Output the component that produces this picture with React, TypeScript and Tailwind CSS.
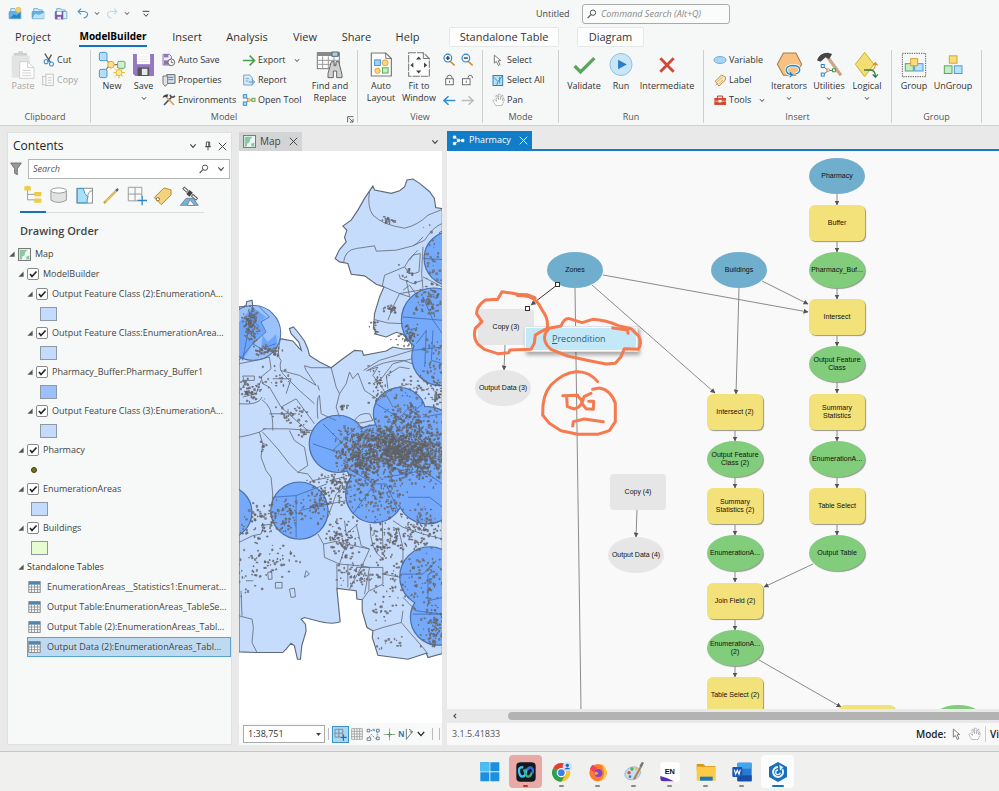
import React from "react";

type Kids = { children?: React.ReactNode };

const Svg = ({ box, w, h, children, className = "" }: Kids & { box: string; w: number; h: number; className?: string }) => (
  <svg viewBox={box} width={w} height={h} fill="none" className={"shrink-0 " + className} aria-hidden="true">
    {children}
  </svg>
);

const Chevron = ({ large = false }: { large?: boolean }) => (
  <Svg box="0 0 12 9" w={large ? 8 : 6} h={large ? 6 : 5}>
    <path d="M2 2 L6 6.5 L10 2" stroke="#444" strokeWidth={large ? 1.7 : 2} />
  </Svg>
);

const Close = () => (
  <Svg box="0 0 24 24" w={9} h={9}>
    <path d="M2 2 L22 22 M22 2 L2 22" stroke="currentColor" strokeWidth="2.6" />
  </Svg>
);

const Magnifier = ({ color = "#555" }: { color?: string }) => (
  <Svg box="0 0 30 30" w={10} h={10}>
    <circle cx="18" cy="11" r="8" stroke={color} strokeWidth="3" />
    <path d="M12 17 L2 27" stroke={color} strokeWidth="3.4" />
  </Svg>
);

/* ---------- quick access icons ---------- */
const QatFolder = ({ kind }: { kind: "new" | "open" | "save" }) => (
  <Svg box="0 0 42 40" w={14} h={13}>
    <path d="M8 14 V5 H20 L24 9 H34 V16" fill="#d8ebf8" stroke="#5aa3d6" strokeWidth="2.5" />
    <rect x="3" y="14" width="36" height="22" rx="1" fill={kind === "save" ? "#e3f0fa" : "#64b2e4"} stroke="#3d90cc" strokeWidth="2" />
    {kind === "new" && <path d="M6 34 L18 22 L26 26 L37 17 V34 Z" fill="#2f83c2" />}
    {kind === "open" && <path d="M4 35 L12 21 Q24 28 39 17 V35 Z" fill="#c3e2f6" />}
    {kind === "new" && <circle cx="31" cy="9" r="8" fill="#f3d36a" stroke="#dfb43c" strokeWidth="2" />}
    {kind === "save" && (
      <>
        <rect x="3" y="13" width="25" height="25" fill="#7a5aa8" />
        <rect x="8" y="14" width="15" height="10" fill="#fff" />
        <rect x="10" y="30" width="11" height="8" fill="#e6e0ef" />
      </>
    )}
  </Svg>
);

const Undo = ({ flip = false, color }: { flip?: boolean; color: string }) => (
  <Svg box="0 0 36 34" w={12} h={11}>
    <g transform={flip ? "translate(36 0) scale(-1 1)" : undefined}>
      <path d="M12 2 L3 11 L12 20 M4 11 H22 Q32 12 32 21 Q31 29 20 31" stroke={color} strokeWidth="3.4" />
    </g>
  </Svg>
);

/* ---------- ribbon icons ---------- */
const icons = {
  paste: (
    <Svg box="34 154 72 84" w={24} h={28}>
      <rect x="36" y="168" width="54" height="66" fill="#e3e3e3" />
      <path d="M42 168 H82 V160 H70 V155 H56 V160 H42 Z" fill="#cfcfcf" />
      <path d="M60 186 H84 L103 204 V236 H60 Z" fill="#fff" stroke="#cfcfcf" strokeWidth="3" />
      <path d="M84 186 V204 H103 M68 212 H94 M68 220 H94 M68 228 H94" stroke="#cfcfcf" strokeWidth="3" />
    </Svg>
  ),
  cut: (
    <Svg box="126 158 38 42" w={13} h={14}>
      <path d="M134 160 L152 188 M154 163 L142 184" stroke="#555" strokeWidth="4" />
      <circle cx="154" cy="191" r="6" stroke="#4b9bd4" strokeWidth="3.4" />
      <circle cx="138" cy="184" r="6" stroke="#4b9bd4" strokeWidth="3.4" />
    </Svg>
  ),
  copy: (
    <Svg box="126 216 40 42" w={13} h={14}>
      <rect x="128" y="226" width="21" height="26" stroke="#c4c4c4" strokeWidth="3" />
      <rect x="138" y="219" width="23" height="35" fill="#fafafa" stroke="#c4c4c4" strokeWidth="3" />
      <path d="M144 230 H156 M144 238 H156 M144 246 H156" stroke="#c4c4c4" strokeWidth="2.5" />
    </Svg>
  ),
  newModel: (
    <Svg box="294 154 84 84" w={28} h={28}>
      <path d="M312 172 L330 194 L310 222 M332 195 H360" stroke="#777" strokeWidth="3.5" />
      <rect x="298" y="158" width="23" height="25" rx="5" fill="#b5ddf5" stroke="#4b9bd4" strokeWidth="3" />
      <rect x="298" y="209" width="23" height="25" rx="5" fill="#b5ddf5" stroke="#4b9bd4" strokeWidth="3" />
      <circle cx="333" cy="195" r="10" fill="#ffe08a" stroke="#dca23a" strokeWidth="3" />
      <rect x="353" y="185" width="22" height="21" rx="4" fill="#d3efd2" stroke="#64a866" strokeWidth="3" />
      <path d="M357 203 V236 M340 219 H375 M345 207 L369 231 M369 207 L345 231" stroke="#e5b62f" strokeWidth="3" />
      <circle cx="357" cy="219" r="9" fill="#fff0a0" stroke="#e5b62f" strokeWidth="3" />
    </Svg>
  ),
  save: (
    <Svg box="396 156 70 76" w={23} h={25}>
      <path d="M399 162 H463 V229 H406 L399 222 Z" fill="#9578bf" />
      <rect x="411" y="162" width="40" height="31" fill="#fff" />
      <path d="M416 171 H446 M416 178 H446 M416 185 H446" stroke="#ddd" strokeWidth="2" />
      <rect x="413" y="203" width="35" height="26" fill="#555" />
      <rect x="426" y="207" width="17" height="19" fill="#e8e8e8" />
    </Svg>
  ),
  autoSave: (
    <Svg box="484 156 42 42" w={14} h={14}>
      <path d="M487 160 H506 L512 166 V192 H487 Z" fill="#f1ecf7" stroke="#8d76b5" strokeWidth="3" />
      <rect x="490" y="160" width="13" height="9" fill="#8d76b5" />
      <rect x="490" y="178" width="12" height="13" fill="#8d76b5" />
      <circle cx="512" cy="184" r="10" fill="#fff" stroke="#666" strokeWidth="3" />
      <path d="M512 178 V185 H518" stroke="#555" strokeWidth="2.5" />
    </Svg>
  ),
  properties: (
    <Svg box="484 216 42 42" w={14} h={14}>
      <path d="M498 221 H523 V247 H498 Z" fill="#cfe5f4" stroke="#666" strokeWidth="3" />
      <path d="M503 229 H518 M503 236 H518" stroke="#777" strokeWidth="3" />
      <path d="M487 225 H501 V248 L494 256 L487 248 Z" fill="#e2e2e2" stroke="#777" strokeWidth="3" />
    </Svg>
  ),
  environments: (
    <Svg box="484 275 42 42" w={14} h={14}>
      <path d="M490 311 L512 288" stroke="#555" strokeWidth="5" />
      <path d="M508 280 Q512 292 523 284" stroke="#555" strokeWidth="5" />
      <path d="M496 286 L520 311" stroke="#d7a06a" strokeWidth="5" />
      <path d="M485 289 Q490 279 503 279 L500 288 L493 287 Z" fill="#444" />
    </Svg>
  ),
  exportIcon: (
    <Svg box="727 158 42 40" w={14} h={13}>
      <path d="M729 178 H764 M750 163 L765 178 L750 193" stroke="#47a04b" strokeWidth="4.8" />
    </Svg>
  ),
  report: (
    <Svg box="727 216 42 42" w={14} h={14}>
      <path d="M732 222 H750 L758 230 V252 H732 Z" fill="#dbe9f4" stroke="#7ba6c8" strokeWidth="3" />
      <path d="M738 233 H748 M738 240 H746" stroke="#7ba6c8" strokeWidth="3" />
      <path d="M747 243 H764 M757 235 L765 243 L757 251" stroke="#4b9bd4" strokeWidth="3" />
    </Svg>
  ),
  openTool: (
    <Svg box="727 275 42 42" w={14} h={14}>
      <path d="M736 286 L748 296 L735 308 M748 296 H760" stroke="#666" strokeWidth="3" />
      <rect x="731" y="280" width="10" height="10" fill="#b5ddf5" stroke="#3d8ecb" strokeWidth="3" />
      <rect x="731" y="302" width="10" height="10" fill="#b5ddf5" stroke="#3d8ecb" strokeWidth="3" />
      <circle cx="748" cy="296" r="4.5" fill="#ffe08a" stroke="#dca23a" strokeWidth="3" />
      <rect x="757" y="291" width="9" height="9" fill="#d3efd2" stroke="#64a866" strokeWidth="3" />
    </Svg>
  ),
  find: (
    <Svg box="0 0 84 84" w={28} h={28}>
      <rect x="4" y="5" width="66" height="48" fill="#fff" stroke="#777" strokeWidth="3" />
      <rect x="4" y="5" width="66" height="10" fill="#888" />
      <path d="M4 28 H70 M4 40 H70 M20 16 V53 M37 16 V53 M54 16 V53" stroke="#999" strokeWidth="3" />
      <rect x="48" y="3" width="18" height="13" fill="#9ed2f2" stroke="#666" strokeWidth="3" />
      <path d="M42 46 L46 32 H54 V44 H60 V32 H68 L78 70 V80 H62 V60 H52 V80 H36 V68 Z" fill="#d0d0d0" stroke="#666" strokeWidth="3" />
    </Svg>
  ),
  autoLayout: (
    <Svg box="110 158 70 80" w={23} h={27}>
      <path d="M114 163 H158 L175 180 V233 H114 Z" fill="#fff" stroke="#777" strokeWidth="3.5" />
      <path d="M158 163 V180 H175" stroke="#777" strokeWidth="3" />
      <rect x="124" y="184" width="18" height="17" fill="#9fd0f3" stroke="#4b9bd4" strokeWidth="3" />
      <circle cx="156" cy="193" r="9" fill="#ffd978" stroke="#dca23a" strokeWidth="3" />
      <circle cx="133" cy="217" r="8" fill="#ffd978" stroke="#dca23a" strokeWidth="3" />
      <rect x="148" y="208" width="17" height="16" fill="#c8eec6" stroke="#57a95c" strokeWidth="3" />
    </Svg>
  ),
  fit: (
    <Svg box="224 158 72 80" w={24} h={27}>
      <path d="M229 163 H273 L291 180 V233 H229 Z" fill="#fff" stroke="#777" strokeWidth="3.2" strokeDasharray="22 3" />
      <path d="M273 163 V180 H291" stroke="#777" strokeWidth="3" />
      <path d="M251 183 L259 174 L267 183 Z M251 216 L259 225 L267 216 Z M243 192 L234 200 L243 208 Z M275 192 L285 200 L275 208 Z" fill="#444" />
    </Svg>
  ),
  select: (
    <Svg box="480 160 30 38" w={10} h={13}>
      <path d="M484 163 L484 187 L490 182 L496 194 L501 191 L495 180 L503 179 Z" fill="#fff" stroke="#666" strokeWidth="2.6" />
    </Svg>
  ),
  selectAll: (
    <Svg box="476 218 36 38" w={12} h={13}>
      <rect x="479" y="222" width="29" height="30" fill="#b6e2f8" stroke="#2e83bd" strokeWidth="3" />
      <path d="M480 226 L494 240 L490 251 M494 240 L507 224 M499 226 V246" stroke="#2e83bd" strokeWidth="2.5" />
    </Svg>
  ),
  pan: (
    <Svg box="474 276 40 42" w={13} h={14}>
      <path d="M485 314 L477 298 L482 296 L488 302 L486 283 L490 282 L494 296 L494 279 L499 279 L500 296 L504 282 L508 283 L506 299 L510 292 L512 296 L505 314 Z" stroke="#999" strokeWidth="2.4" fill="#fff" strokeDasharray="5 1.5" />
    </Svg>
  ),
  validate: (
    <Svg box="722 160 70 66" w={23} h={22}>
      <path d="M727 196 L745 214 L787 172" stroke="#5aa55c" strokeWidth="10" />
    </Svg>
  ),
  run: (
    <Svg box="828 158 74 76" w={24} h={25}>
      <circle cx="865" cy="196" r="34" fill="#c9e5f8" stroke="#8fbde0" strokeWidth="3" />
      <path d="M856 181 L883 196 L856 211 Z" fill="#2d7fc4" />
    </Svg>
  ),
  intermediate: (
    <Svg box="0 0 54 54" w={18} h={18}>
      <path d="M7 7 L47 47 M47 7 L7 47" stroke="#cf4a34" strokeWidth="8.5" />
    </Svg>
  ),
  variable: (
    <Svg box="138 164 44 30" w={14} h={10}>
      <ellipse cx="160" cy="179" rx="19" ry="11" fill="#a9d4f5" stroke="#69a9da" strokeWidth="3" />
    </Svg>
  ),
  label: (
    <Svg box="138 218 40 40" w={13} h={13}>
      <path d="M142 240 L161 221 L174 228 L172 238 L153 255 Z" fill="#fbe9c4" stroke="#b78b45" strokeWidth="3" />
      <path d="M148 242 L164 228 M154 247 L166 236 M144 252 L150 246" stroke="#b78b45" strokeWidth="2" />
    </Svg>
  ),
  tools: (
    <Svg box="138 280 44 34" w={14} h={11}>
      <path d="M152 289 V283 H168 V289" stroke="#b03c2c" strokeWidth="3" />
      <rect x="142" y="289" width="37" height="22" fill="#d2492f" />
      <path d="M142 299 H179" stroke="#f4c3b6" strokeWidth="2.5" />
      <rect x="155" y="295" width="10" height="8" fill="#fff" />
    </Svg>
  ),
  iterators: (
    <Svg box="330 156 80 80" w={27} h={27}>
      <path d="M352 162 H389 L406 195 L389 228 H352 L334 195 Z" fill="#f8c182" stroke="#a87a4a" strokeWidth="3" />
      <path d="M388 224 Q402 220 400 208 Q397 199 380 199 Q361 200 360 212 Q361 224 376 226" stroke="#fff" strokeWidth="9" />
      <path d="M388 224 Q402 220 400 208 Q397 199 380 199 Q361 200 360 212 Q361 224 376 226 M371 219 L378 226 L371 233" stroke="#2b84c6" strokeWidth="4" />
    </Svg>
  ),
  utilities: (
    <Svg box="448 154 82 82" w={27} h={27}>
      <path d="M483 172 L524 228" stroke="#c9a68d" strokeWidth="10" />
      <path d="M451 182 Q458 160 484 159 L497 163 L488 178 L477 173 L462 187 Z" fill="#444" />
      <path d="M471 202 L485 213 L472 225 M485 213 H500" stroke="#666" strokeWidth="3" />
      <rect x="464" y="195" width="9" height="9" fill="#fff" stroke="#2b84c6" strokeWidth="3" />
      <rect x="464" y="221" width="9" height="9" fill="#fff" stroke="#2b84c6" strokeWidth="3" />
      <circle cx="485" cy="212" r="4" fill="#fff" stroke="#d08a38" strokeWidth="3" />
      <rect x="498" y="208" width="9" height="9" fill="#fff" stroke="#3f9a4a" strokeWidth="3" />
    </Svg>
  ),
  logical: (
    <Svg box="564 154 78 84" w={26} h={28}>
      <path d="M596 158 L624 194 L596 231 L568 194 Z" fill="#f2de73" stroke="#cdb03e" strokeWidth="3" />
      <path d="M600 211 H617 Q628 210 628 190 M621 197 L628 189 L635 197" stroke="#e08b37" strokeWidth="3.5" />
      <path d="M594 211 H615 Q628 213 628 231 M620 224 L628 233 L636 224" stroke="#3c7d46" strokeWidth="4" />
    </Svg>
  ),
  group: (
    <Svg box="706 158 78 78" w={26} h={26}>
      <rect x="710" y="162" width="70" height="70" stroke="#444" strokeWidth="2.6" strokeDasharray="4 3" />
      <rect x="719" y="193" width="24" height="22" fill="#c5ecc5" stroke="#5ba562" strokeWidth="3" />
      <rect x="747" y="193" width="25" height="22" fill="#b9e2f9" stroke="#4b9bd4" strokeWidth="3" />
      <rect x="735" y="178" width="21" height="21" fill="#fbdc7a" stroke="#d5a23a" strokeWidth="3" />
    </Svg>
  ),
  ungroup: (
    <Svg box="832 165 60 62" w={20} h={21}>
      <rect x="851" y="170" width="23" height="22" fill="#fbdc7a" stroke="#d5a23a" strokeWidth="3" />
      <rect x="836" y="200" width="23" height="23" fill="#c5ecc5" stroke="#5ba562" strokeWidth="3" />
      <rect x="866" y="200" width="23" height="23" fill="#b9e2f9" stroke="#4b9bd4" strokeWidth="3" />
    </Svg>
  ),
};

const ZoomIcon = ({ plus = false }: { plus?: boolean }) => (
  <Svg box="0 0 40 42" w={13} h={14}>
    <path d="M22 25 L36 38" stroke="#d58a3a" strokeWidth="5" />
    <circle cx="15" cy="15" r="12" fill="#eaf5fc" stroke="#2d7fbd" strokeWidth="3.4" />
    <path d={plus ? "M9 15 H21 M15 9 V21" : "M9 15 H21"} stroke="#333" strokeWidth="4" />
  </Svg>
);
const LockIcon = ({ open = false }: { open?: boolean }) => (
  <Svg box="0 0 40 38" w={13} h={12}>
    <rect x={open ? 4 : 8} y="15" width="24" height="19" fill="#fff" stroke="#666" strokeWidth="3" />
    <path d={open ? "M22 15 V10 Q23 4 29 4 Q36 4 36 13" : "M12 15 V10 Q13 4 20 4 Q27 4 28 10 V15"} stroke="#666" strokeWidth="3" />
    <path d={open ? "M16 21 V28" : "M20 21 V28"} stroke="#666" strokeWidth="3" />
  </Svg>
);
const ArrowIcon = ({ right = false }: { right?: boolean }) => (
  <Svg box="0 0 40 32" w={13} h={11}>
    <path
      d={right ? "M2 16 H36 M23 3 L37 16 L23 29" : "M38 16 H4 M17 3 L3 16 L17 29"}
      stroke={right ? "#bdbdbd" : "#2e8fd3"}
      strokeWidth="4.8"
    />
  </Svg>
);

const Big = ({ icon, lines, w, chevron = false, muted = false }: { icon: React.ReactNode; lines: string[]; w: string; chevron?: boolean; muted?: boolean }) => (
  <button className={`flex shrink-0 flex-col items-center text-[9px] leading-3 whitespace-nowrap ${w} ${muted ? "text-[#a5a5a5]" : "text-[#333]"}`}>
    <span className="flex h-[30px] items-center pb-px">{icon}</span>
    {lines.map((l) => (
      <span key={l}>{l}</span>
    ))}
    {chevron && (
      <span className="flex h-3 items-center">
        <Chevron />
      </span>
    )}
  </button>
);

const Small = ({ icon, label, chevron = false, muted = false }: { icon: React.ReactNode; label: string; chevron?: boolean; muted?: boolean }) => (
  <button className={`flex h-5 items-center gap-[2px] text-[9px] whitespace-nowrap ${muted ? "text-[#a5a5a5]" : "text-[#333]"}`}>
    <span className="flex w-[14px] justify-center">{icon}</span>
    {label}
    {chevron && (
      <span className="pl-[6px]">
        <Chevron />
      </span>
    )}
  </button>
);

const RibbonGroup = ({ label, w, children }: Kids & { label: string; w: string }) => (
  <section aria-label={label} className={`flex h-[73px] shrink-0 flex-col border-r border-[#cfd1d1] ${w}`}>
    <div className="flex h-[62px] items-start">{children}</div>
    <div className="text-center text-[9px] leading-3 text-[#555]">{label}</div>
  </section>
);

const Header = () => (
  <header className="shrink-0 border-b border-[#cfcfcf] bg-[#f6f8f8]">
    <div className="flex h-[27px] items-center">
      <div className="flex w-[536px] items-center pl-2">
        <button aria-label="New project" className="w-[23px]"><QatFolder kind="new" /></button>
        <button aria-label="Open project" className="w-[23px]"><QatFolder kind="open" /></button>
        <button aria-label="Save project" className="w-[23px]"><QatFolder kind="save" /></button>
        <button aria-label="Undo" className="w-[17px]"><Undo color="#3f94d2" /></button>
        <button aria-label="Undo list" className="w-3"><Chevron /></button>
        <button aria-label="Redo" className="w-[18px]"><Undo flip color="#b9d9ef" /></button>
        <button aria-label="Redo list" className="w-[18px]"><Chevron /></button>
        <button aria-label="Customize toolbar">
          <Svg box="0 0 24 24" w={8} h={8}>
            <path d="M2 4 H22 M5 11 L12 19 L19 11" stroke="#444" strokeWidth="3" />
          </Svg>
        </button>
      </div>
      <span className="w-[46px] text-[9px] text-[#444]">Untitled</span>
      <label className="flex h-5 w-[148px] items-center gap-1 rounded-[3px] border border-[#a9abab] bg-[#fafbfb] px-1">
        <Magnifier />
        <input aria-label="Command Search" placeholder="Command Search (Alt+Q)" className="w-full min-w-0 bg-transparent text-[9px] italic outline-none placeholder:text-[#888]" />
      </label>
    </div>
    <nav className="flex h-5 items-center text-[11px] leading-5 text-[#333]">
      <button className="w-[66px]">Project</button>
      <button className="flex w-[94px] justify-center text-[10px] font-bold text-black">
        <span className="h-5 border-b-2 border-[#1273ba] leading-[19px]">ModelBuilder</span>
      </button>
      <button className="w-[54px]">Insert</button>
      <button className="w-[66px]">Analysis</button>
      <button className="w-[50px]">View</button>
      <button className="w-[53px]">Share</button>
      <button className="mr-[17px] w-[49px]">Help</button>
      <button className="mr-[18px] h-5 w-[110px] rounded-xs border border-[#e6e8e8] bg-[#fdfdfd] leading-[18px]">Standalone Table</button>
      <button className="h-5 w-[67px] rounded-xs border border-[#e6e8e8] bg-[#fdfdfd] leading-[18px]">Diagram</button>
    </nav>
    <div className="flex h-[78px] pt-[3px]">
      <RibbonGroup label="Clipboard" w="w-[91px]">
        <Big icon={icons.paste} lines={["Paste"]} w="ml-2 w-[30px]" muted />
        <div className="ml-[3px] flex flex-col">
          <Small icon={icons.cut} label="Cut" />
          <Small icon={icons.copy} label="Copy" muted />
        </div>
      </RibbonGroup>
      <RibbonGroup label="Model" w="relative w-[267px]">
        <Big icon={icons.newModel} lines={["New"]} w="ml-[6px] w-[30px]" />
        <Big icon={icons.save} lines={["Save"]} w="w-[33px]" chevron />
        <div className="ml-[2px] flex w-[80px] flex-col">
          <Small icon={icons.autoSave} label="Auto Save" />
          <Small icon={icons.properties} label="Properties" />
          <Small icon={icons.environments} label="Environments" />
        </div>
        <div className="flex w-[67px] flex-col">
          <Small icon={icons.exportIcon} label="Export" chevron />
          <Small icon={icons.report} label="Report" />
          <Small icon={icons.openTool} label="Open Tool" />
        </div>
        <Big icon={icons.find} lines={["Find and", "Replace"]} w="w-[42px]" />
        <button aria-label="Model options" className="absolute right-[3px] bottom-0">
          <Svg box="0 0 22 22" w={7} h={7}>
            <path d="M2 20 V2 H20 M7 7 L18 18 M19 9 V19 H9" stroke="#555" strokeWidth="2.8" />
          </Svg>
        </button>
      </RibbonGroup>
      <RibbonGroup label="View" w="w-[125px]">
        <Big icon={icons.autoLayout} lines={["Auto", "Layout"]} w="ml-1 w-[38px]" />
        <Big icon={icons.fit} lines={["Fit to", "Window"]} w="w-[38px]" />
        <div className="ml-[2px] grid grid-cols-2">
          <button aria-label="Zoom in" className="flex h-5 w-[18px] items-center justify-center"><ZoomIcon plus /></button>
          <button aria-label="Zoom out" className="flex h-5 w-[18px] items-center justify-center"><ZoomIcon /></button>
          <button aria-label="Lock" className="flex h-5 w-[18px] items-center justify-center"><LockIcon /></button>
          <button aria-label="Unlock" className="flex h-5 w-[18px] items-center justify-center"><LockIcon open /></button>
          <button aria-label="Previous extent" className="flex h-5 w-[18px] items-center justify-center"><ArrowIcon /></button>
          <button aria-label="Next extent" className="flex h-5 w-[18px] items-center justify-center"><ArrowIcon right /></button>
        </div>
      </RibbonGroup>
      <RibbonGroup label="Mode" w="w-[76px]">
        <div className="ml-2 flex flex-col">
          <Small icon={icons.select} label="Select" />
          <Small icon={icons.selectAll} label="Select All" />
          <Small icon={icons.pan} label="Pan" />
        </div>
      </RibbonGroup>
      <RibbonGroup label="Run" w="w-[145px]">
        <Big icon={icons.validate} lines={["Validate"]} w="ml-[5px] w-[40px]" />
        <Big icon={icons.run} lines={["Run"]} w="w-[34px]" />
        <Big icon={icons.intermediate} lines={["Intermediate"]} w="w-[58px]" />
      </RibbonGroup>
      <RibbonGroup label="Insert" w="w-[188px]">
        <div className="ml-[9px] flex w-[56px] flex-col">
          <Small icon={icons.variable} label="Variable" />
          <Small icon={icons.label} label="Label" />
          <Small icon={icons.tools} label="Tools" chevron />
        </div>
        <Big icon={icons.iterators} lines={["Iterators"]} w="w-[40px]" chevron />
        <Big icon={icons.utilities} lines={["Utilities"]} w="w-[40px]" chevron />
        <Big icon={icons.logical} lines={["Logical"]} w="w-[36px]" chevron />
      </RibbonGroup>
      <RibbonGroup label="Group" w="w-[90px]">
        <Big icon={icons.group} lines={["Group"]} w="ml-[5px] w-[34px]" />
        <Big icon={icons.ungroup} lines={["UnGroup"]} w="w-[44px]" />
      </RibbonGroup>
    </div>
  </header>
);

/* ---------- contents pane ---------- */
const MapIcon = () => (
  <Svg box="0 0 40 40" w={13} h={13}>
    <rect x="1.5" y="1.5" width="37" height="37" fill="#eef6f4" stroke="#777" strokeWidth="3" />
    <path d="M5 5 H30 L22 13 L20 22 L13 26 L12 35 H5 Z" fill="#8cc7a2" />
    <path d="M25 27 L35 23 V35 H26 Z" fill="#8cc7a2" />
  </Svg>
);
const TableIcon = () => (
  <Svg box="0 0 38 36" w={13} h={12}>
    <rect x="2" y="2" width="34" height="32" fill="#fff" stroke="#777" strokeWidth="2.6" />
    <rect x="2" y="2" width="34" height="9" fill="#4d87ad" />
    <path d="M2 18 H36 M2 26 H36 M10 11 V34 M19 11 V34 M28 11 V34" stroke="#888" strokeWidth="2.4" />
  </Svg>
);
const Expander = () => (
  <Svg box="0 0 16 16" w={6} h={6} className="mr-[3px]">
    <path d="M15 1 V15 H1 Z" fill="#555" />
  </Svg>
);

const Layer = ({ id, label, indent }: { id: string; label: string; indent: string }) => (
  <div className={`flex h-5 items-center ${indent}`}>
    <Expander />
    <span className="mr-1 grid shrink-0 place-items-center">
      <input id={id} type="checkbox" defaultChecked className="peer col-start-1 row-start-1 size-[12px] appearance-none rounded-xs border border-[#8a8a8a] bg-white" />
      <svg viewBox="0 0 12 12" className="pointer-events-none col-start-1 row-start-1 hidden size-[12px] peer-checked:block" fill="none" aria-hidden="true">
        <path d="M3 6 L5 8.5 L9.5 3.5" stroke="#222" strokeWidth="1.6" />
      </svg>
    </span>
    <label htmlFor={id} className="whitespace-nowrap">{label}</label>
  </div>
);
const Swatch = ({ color, indent }: { color: string; indent: string }) => (
  <div className={`flex h-[19px] items-center ${indent}`}>
    <span className={`h-[14px] w-[17px] border border-[#8d98a5] ${color}`} />
  </div>
);

const TableRow = ({ label, selected = false }: { label: string; selected?: boolean }) => (
  <button className={`ml-[19px] flex h-5 items-center gap-[6px] border text-left whitespace-nowrap ${selected ? "border-[#5aa0d3] bg-[#bedaf0]" : "border-transparent"}`}>
    <TableIcon />
    {label}
  </button>
);

const contentTools = [
  { name: "List By Drawing Order", art: <><path d="M14 16 V46 H38 M14 29 H38" stroke="#9a9a9a" strokeWidth="3" /><path d="M4 4 H10 V2 H18 V4 H24 V17 H4 Z M35 22 H57 V35 H35 Z M35 42 H57 V55 H35 Z" fill="#efcb45" /></> },
  { name: "List By Data Source", art: <><path d="M6 14 V44 Q30 58 54 44 V14" fill="#e2e2e2" stroke="#999" strokeWidth="3" /><ellipse cx="30" cy="14" rx="24" ry="8" fill="#fff" stroke="#999" strokeWidth="3" /></> },
  { name: "List By Selection", art: <><rect x="6" y="7" width="48" height="46" fill="#fff" stroke="#888" strokeWidth="3" /><path d="M7 8 H26 Q28 26 40 34 Q36 44 38 52 H7 Z" fill="#a9e0fa" stroke="#3c94c6" strokeWidth="3" /><path d="M40 34 Q38 18 54 14" stroke="#888" strokeWidth="3" /></> },
  { name: "List By Editing", art: <><path d="M9 53 L50 12" stroke="#c9a040" strokeWidth="7" /><path d="M14 48 L46 16" stroke="#f3cb55" strokeWidth="4" /><path d="M47 15 L53 9" stroke="#666" strokeWidth="7" /></> },
  { name: "List By Snapping", art: <><path d="M4 4 H46 V32 M4 4 V46 H32 M4 25 H46 M25 4 V46" stroke="#999" strokeWidth="3" /><path d="M47 30 V60 M32 45 H62" stroke="#2f84c0" strokeWidth="4" /></> },
  { name: "List By Labeling", art: <><path d="M4 36 L34 6 L56 12 V28 L26 58 Z" fill="#f2d27a" stroke="#b48a34" strokeWidth="3" /><circle cx="15" cy="41" r="5" fill="#fff" stroke="#8a6a2a" strokeWidth="3" /></> },
  { name: "List By Perspective Imagery", art: <><path d="M4 60 L22 38 H44 L60 60 Z" fill="#6fb5e3" stroke="#666" strokeWidth="2" /><path d="M26 60 L34 42 L48 60 Z" fill="#fff" stroke="#666" strokeWidth="2" /><path d="M13 5 L27 17 M40 28 L56 42" stroke="#555" strokeWidth="10" /><path d="M15 7 L26 16 M42 30 L54 40" stroke="#fff" strokeWidth="4" /><rect x="27" y="15" width="13" height="16" transform="rotate(40 33 22)" fill="#444" /></> },
];

const Contents = () => (
  <aside className="flex w-[225px] shrink-0 flex-col overflow-hidden border border-[#dfe1e1] bg-[#f6f9f8] text-[9px] text-[#444]">
    <div className="flex h-[26px] shrink-0 items-center pr-1 pl-[5px] text-[#444]">
      <h2 className="flex-1 text-[12px] text-[#222]">Contents</h2>
      <button aria-label="Pane menu" className="mr-[7px]"><Chevron large /></button>
      <button aria-label="Pin" className="mr-[6px]">
        <Svg box="0 0 24 30" w={8} h={10}>
          <path d="M7 3 H17 V17 H7 Z M3 17 H21 M12 17 V28 M14 3 V17" stroke="#444" strokeWidth="2.6" />
        </Svg>
      </button>
      <button aria-label="Close pane"><Close /></button>
    </div>
    <div className="flex items-center pr-px pl-[2px]">
      <Svg box="0 0 36 42" w={12} h={14} className="mr-[6px]">
        <path d="M2 3 H34 L22 20 V38 L14 34 V20 Z" fill="#999" stroke="#666" strokeWidth="2.5" />
      </Svg>
      <div className="flex h-5 flex-1 items-center border border-[#b4b6b6] bg-white px-1">
        <input aria-label="Search" placeholder="Search" className="w-full min-w-0 text-[9px] italic outline-none placeholder:text-[#555]" />
        <button aria-label="Run search" className="mr-2"><Magnifier /></button>
        <button aria-label="Search options"><Chevron large /></button>
      </div>
    </div>
    <div className="ml-3 flex h-[34px] w-[184px] shrink-0 border-b border-[#dadcdc]">
      {contentTools.map((t, i) => (
        <button key={t.name} aria-label={t.name} className={`flex h-[34px] w-[26px] shrink-0 items-center justify-center ${i === 0 ? "border-b-2 border-[#1273ba]" : ""}`}>
          <svg viewBox="0 0 62 62" width="20" height="20" fill="none" aria-hidden="true">{t.art}</svg>
        </button>
      ))}
    </div>
    <h3 className="mt-2 mb-[3px] pl-3 text-[11px] leading-5 font-semibold text-[#444]">Drawing Order</h3>
    <div className="flex flex-col">
      <div className="flex h-5 items-center pl-px">
        <Expander />
        <MapIcon />
        <span className="pl-1">Map</span>
      </div>
      <Layer id="l-mb" label="ModelBuilder" indent="pl-[10px]" />
      <Layer id="l-1" label="Output Feature Class (2):EnumerationA..." indent="pl-[19px]" />
      <Swatch color="bg-[#c5dbfd]" indent="pl-8" />
      <Layer id="l-2" label="Output Feature Class:EnumerationArea..." indent="pl-[19px]" />
      <Swatch color="bg-[#c5dbfd]" indent="pl-8" />
      <Layer id="l-3" label="Pharmacy_Buffer:Pharmacy_Buffer1" indent="pl-[19px]" />
      <Swatch color="bg-[#9cc0fb]" indent="pl-8" />
      <Layer id="l-4" label="Output Feature Class (3):EnumerationA..." indent="pl-[19px]" />
      <Swatch color="bg-[#c5dbfd]" indent="pl-8" />
      <Layer id="l-ph" label="Pharmacy" indent="pl-[10px]" />
      <div className="flex h-[19px] items-center pl-[23px]">
        <span className="size-[6px] rounded-full border border-[#3b3b10] bg-[#77741f]" />
      </div>
      <Layer id="l-ea" label="EnumerationAreas" indent="pl-[10px]" />
      <Swatch color="bg-[#c5dbfd]" indent="pl-[23px]" />
      <Layer id="l-bd" label="Buildings" indent="pl-[10px]" />
      <Swatch color="bg-[#e9fbd0]" indent="pl-[23px]" />
      <div className="flex h-5 items-center pl-[10px] font-medium text-[#333]">
        <Expander />
        Standalone Tables
      </div>
      <TableRow label="EnumerationAreas__Statistics1:Enumerat..." />
      <TableRow label="Output Table:EnumerationAreas_TableSe..." />
      <TableRow label="Output Table (2):EnumerationAreas_Tabl..." />
      <TableRow label="Output Data (2):EnumerationAreas_Tabl..." selected />
    </div>
  </aside>
);

/* ---------- map view ---------- */
const landPath =
  "M9 530 L30 528 L32 514 L48 510 L50 526 L130 615 L132 625 L170 632 L190 655 L196 660 L188 635 L165 610 L160 595 L172 590 L185 605 L205 632 L215 655 L220 675 L250 695 L285 712 L320 685 L355 660 L378 662 L382 675 L450 662 L470 650 L500 656 L528 655 L525 640 L500 612 L480 606 L450 620 L420 612 L412 590 L415 550 L430 500 L443 470 L420 462 L385 437 L345 432 L335 400 L310 395 L297 385 L310 358 L330 335 L325 322 L332 300 L320 288 L345 270 L365 240 L385 205 L410 168 L415 180 L465 190 L490 182 L505 170 L512 150 L530 147 L550 160 L580 185 L594 205 L598 232 L618 236 V1568 L575 1580 L570 1567 L515 1585 L425 1573 L408 1520 L410 1500 L392 1490 L378 1440 L378 1407 L362 1405 L360 1380 L302 1373 L312 1473 Q290 1482 250 1472 L205 1460 L195 1465 L208 1480 L210 1500 L197 1545 L193 1585 L184 1585 L175 1545 L165 1537 L150 1555 L140 1565 L62 1565 L9 1563 Z";

const boundaries = [
  "M400 182 Q392 230 410 255 Q440 285 505 294 Q545 285 575 255 L618 238",
  "M322 398 Q325 360 360 355 L415 347 L420 363 L480 360 L530 347 L565 330 Q590 290 618 280",
  "M530 347 Q545 340 560 320 M545 360 L520 385 L505 410 L445 435 L438 468 M505 410 Q520 440 548 425 L552 370 L530 375 L520 390",
  "M443 470 L490 490 L560 478 L556 430 L560 350 M490 490 L470 530 L455 570 M415 568 L455 578 L500 580 M490 490 L520 500 L510 450",
  "M488 432 L492 445 L530 460 L560 450 M500 480 L520 465 L545 500 M560 440 L618 470",
  "M133 625 Q120 680 135 690 Q125 720 150 740 L190 780 L235 820 M133 720 L190 735 L240 765",
  "M205 706 L225 712 L285 712 M205 706 L210 720 L240 765",
  "M285 712 L300 770 L310 790 L300 830 L310 860 M310 790 L330 760 L340 725 L350 745 L365 728 L385 780 L430 810",
  "M245 865 Q240 800 250 795 L255 850 L300 870 M250 780 L245 765",
  "M382 720 L430 690 L528 660 M390 722 Q440 690 500 690 L528 700 M410 760 L435 745 L470 700 L528 685 M430 800 L470 775 L520 760 M455 775 L450 735 L490 710 L520 715",
  "M395 720 L425 710 L410 735 L440 775 L470 830 M355 870 Q370 845 400 850 L410 870 L370 878 Z",
  "M9 700 L60 690 L100 680 L105 715 L75 740 L80 760 L100 770 L135 830 L180 870 L215 900 M75 750 L60 790 L20 800",
  "M9 820 Q70 825 78 800 M78 808 Q110 830 110 880 L110 900 M80 895 H150 L230 900",
  "M20 737 H55 V750 H24 Z M110 745 L165 745 L150 790 M100 850 H180 M135 830 L180 805 L235 880",
  "M70 905 L80 940 L75 980 L90 1020 L105 1040 L110 1090 L108 1130 M80 905 L125 955 L160 1000 L185 1025 L215 1005 L205 950 L175 930 L160 900 M185 1025 L215 1030 L230 1050 L280 1040",
  "M9 920 Q40 915 70 905 L90 893",
  "M9 1235 L50 1215 L75 1210 L85 1180 M108 1180 L75 1185 M245 1210 L262 1240 L265 1280 L310 1300 L330 1240 L400 1255 L380 1300 L340 1375 M310 1300 L370 1305 L400 1310 L385 1390",
  "M262 1240 L300 1232 L330 1240 M325 1170 L330 1210 L365 1180 M400 1255 L375 1245 L360 1180 M402 1180 Q400 1260 440 1285 M438 1170 L440 1250 M365 1310 H440 V1360 L400 1380 M440 1330 L495 1340 M470 1170 L500 1190 L560 1210 L618 1225",
  "M303 1373 L302 1300 M335 1300 V1370 M398 1330 V1380 L378 1407 M410 1500 L440 1490 L495 1475 L525 1510 L560 1550 L575 1570 M495 1475 L500 1440 M485 1190 L500 1250 L500 1300",
  "M9 1455 L48 1465 L52 1490 L48 1535 L62 1563 M15 1380 L18 1455 M280 1050 L320 1040 L335 1060 L300 1090 L275 1160 M280 1120 L330 1110",
  "M210 1320 L220 1330 L205 1340 Z M160 1375 L175 1372 L178 1398 L165 1400 Z M118 1355 H138 V1372 H118 Z M95 1325 L107 1323 L108 1345 L97 1346 Z M30 1350 H52",
];

const buffers = [
  [645, 385, 80], [592, 570, 95], [612, 680, 84], [490, 850, 77], [305, 940, 84], [570, 930, 100],
  [420, 980, 95], [520, 1010, 100], [415, 1090, 85], [572, 1090, 88], [190, 1140, 84], [-32, 1145, 78], [580, 1338, 88], [605, 1460, 81],
];

const bufferLines =
  "M50 526 L20 690 M70 530 L100 560 L75 575 L90 605 L50 640 L9 690 M40 560 L70 590 M50 640 L75 655 L120 640 M565 385 L618 388 M500 560 L618 570 M560 500 L590 570 L618 610 M540 640 L570 600 L565 710 M590 600 L585 690 L618 700 M530 660 L618 650 M420 820 L500 870 L560 820 M450 900 L520 830 M560 860 L618 850 M110 1100 L180 1095 L272 1060 M180 1095 L180 1220 M190 1140 L275 1120 M330 1010 L415 1060 L350 1150 M415 1060 L450 1060 L485 1140 M450 1040 L560 1020 L618 1060 M495 1330 L560 1330 L600 1290 M575 1330 L575 1410 L618 1400 M500 1400 L540 1440 L618 1450 M530 1450 H618 M230 940 L290 960 L350 900 M260 880 L310 930 M515 1100 L580 1100 L618 1130";

/** Deterministic scatter of building footprints, grouped by settlement: cx, cy, rx, ry, count. */
const clusters = [
  [455, 268, 20, 9, 16], [510, 430, 24, 22, 16], [590, 380, 26, 80, 34], [460, 535, 18, 10, 24], [410, 590, 14, 20, 12], [490, 630, 30, 18, 9],
  [575, 515, 34, 36, 70], [520, 605, 20, 30, 44], [590, 700, 34, 60, 50], [42, 580, 20, 45, 100], [90, 660, 44, 14, 44], [45, 775, 34, 30, 60],
  [170, 850, 50, 20, 32], [130, 740, 50, 40, 20], [420, 760, 24, 50, 34], [510, 780, 70, 50, 44], [600, 790, 24, 40, 44], [520, 870, 80, 44, 190],
  [470, 960, 140, 54, 820], [540, 980, 80, 70, 420], [420, 920, 90, 36, 200], [380, 1000, 70, 60, 230], [300, 1070, 44, 44, 80], [430, 1100, 70, 50, 110],
  [150, 1150, 40, 45, 84], [240, 1110, 34, 56, 66], [70, 1180, 56, 50, 70], [110, 1290, 70, 46, 50], [45, 1330, 36, 60, 24], [320, 1220, 44, 50, 90],
  [450, 1230, 54, 54, 100], [560, 1190, 56, 60, 110], [370, 1330, 60, 36, 60], [480, 1370, 50, 60, 50], [575, 1360, 50, 80, 84], [590, 1490, 34, 54, 90],
  [460, 1530, 36, 22, 14], [320, 828, 12, 8, 10], [80, 960, 10, 50, 10], [200, 900, 16, 24, 14], [430, 1440, 30, 50, 14],
];

const buildingPath = (() => {
  let seed = 7;
  const rnd = () => {
    seed = (seed * 16807) % 2147483647;
    return seed / 2147483647;
  };
  const parts: string[] = [];
  clusters.forEach(([cx, cy, rx, ry, n]) => {
    for (let i = 0; i < n; i++) {
      const x = Math.round(cx + (rnd() + rnd() - 1) * rx * 1.35);
      const y = Math.round(cy + (rnd() + rnd() - 1) * ry * 1.35);
      const w = 1 + Math.round(rnd() * 5);
      const h = 1 + Math.round(rnd() * 5);
      parts.push(`M${x} ${y}h${w}v${h}h${-w}z`);
    }
  });
  return parts.join("");
})();

const MapView = () => (
  <section aria-label="Map" className="mr-[5px] ml-[7px] flex w-[203px] shrink-0 flex-col">
    <div className="flex h-[19px] shrink-0 items-center justify-between pr-[3px]">
      <div className="flex h-[19px] items-center gap-1 bg-[#d3d4d5] px-1 text-[10px] text-[#444]">
        <MapIcon />
        Map
        <button aria-label="Close map" className="ml-1"><Close /></button>
      </div>
      <button aria-label="View list"><Chevron large /></button>
    </div>
    <div className="min-h-0 flex-1 overflow-hidden bg-white">
      <svg viewBox="9 63 609 1713" preserveAspectRatio="xMinYMin slice" className="h-full w-full" fill="none" role="img" aria-label="Enumeration areas and pharmacy buffers">
        <path d={landPath} fill="#c6dcfd" stroke="#5f6977" strokeWidth="3.4" />
        <circle cx="52" cy="608" r="82" fill="#9cc2fc" />
        <path d="M9 575 L50 530 L90 560 L75 575 L88 605 L50 640 L20 690 L9 680 Z M75 655 L80 615 L95 635 L120 612 L125 650 L100 660 Z" fill="#6ea5fa" />
        <circle cx="52" cy="608" r="82" stroke="#4c6fa8" strokeWidth="3" />
        <g stroke="#4c6fa8" strokeWidth="7">
          {buffers.map(([x, y, r]) => <circle key={`${x}-${y}`} cx={x} cy={y} r={r} />)}
        </g>
        <g fill="#74a9fc">
          {buffers.map(([x, y, r]) => <circle key={`${x}-${y}`} cx={x} cy={y} r={r} />)}
        </g>
        <g stroke="#68717e" strokeWidth="2.6">
          {boundaries.map((d) => <path key={d} d={d} />)}
        </g>
        <path d={bufferLines} stroke="#4570b5" strokeWidth="2.6" />
        <path d={buildingPath} fill="#9a9a9a" stroke="#606266" strokeWidth="2" />
      </svg>
    </div>
    <div className="flex h-[22px] shrink-0 items-center bg-[#f8f9f9] pl-1">
      <div className="relative flex items-center">
        <select aria-label="Map scale" className="h-[18px] w-[82px] appearance-none border border-[#a9abab] bg-white px-1 text-[9px] text-[#333]">
          <option>1:38,751</option>
        </select>
        <Svg box="0 0 10 6" w={5} h={3} className="pointer-events-none absolute right-1">
          <path d="M0 0 H10 L5 6 Z" fill="#444" />
        </Svg>
      </div>
      <span className="mx-[3px] h-3 w-px bg-[#bbb]" />
      <button aria-label="Snapping" className="flex size-[17px] items-center justify-center border border-[#3b90c8] bg-[#a9d6f1]">
        <Svg box="0 0 40 40" w={13} h={13}>
          <path d="M3 4 H27 V24 M3 4 V28 H20 M3 16 H27 M15 4 V28" stroke="#889" strokeWidth="3" />
          <path d="M29 20 V39 M20 29 H39" stroke="#1f6fae" strokeWidth="4" />
        </Svg>
      </button>
      <button aria-label="Grid" className="ml-[2px]">
        <Svg box="0 0 36 36" w={12} h={12}>
          <path d="M2 2 H34 V34 H2 Z M2 10 H34 M2 18 H34 M2 26 H34 M10 2 V34 M18 2 V34 M26 2 V34" stroke="#999" strokeWidth="2.4" />
        </Svg>
      </button>
      <button aria-label="Infer" className="ml-[3px]">
        <Svg box="0 0 42 40" w={14} h={13}>
          <path d="M6 8 H36 M34 10 V34 M4 34 L16 20 L30 34" stroke="#3c8cc4" strokeWidth="3" strokeDasharray="5 3" />
          <path d="M3 4 H11 V12 H3 Z M20 4 H26 M32 4 H40 V12 H32 Z M32 28 H40 V36 H32 Z M3 30 H14 V38 H3 Z" fill="#fff" stroke="#5c6b78" strokeWidth="2.6" />
        </Svg>
      </button>
      <button aria-label="Inset" className="ml-[3px]">
        <Svg box="0 0 40 40" w={13} h={13}>
          <path d="M20 2 V38 M2 20 H38" stroke="#999" strokeWidth="2.6" />
          <path d="M12 20 H28 M20 12 V28" stroke="#4d9a4f" strokeWidth="3.6" />
        </Svg>
      </button>
      <button aria-label="Rotation" className="ml-[2px] flex items-center text-[8px] font-bold text-[#1f7ec2]">
        N
        <Svg box="0 0 24 36" w={8} h={12}>
          <path d="M4 2 V34 L20 14 M12 4 Q20 4 20 14 M15 10 L20 15 L24 9" stroke="#666" strokeWidth="2.6" />
        </Svg>
      </button>
      <button aria-label="More" className="ml-1">
        <Svg box="0 0 20 14" w={8} h={6}>
          <path d="M2 2 L10 11 L18 2" stroke="#222" strokeWidth="3" />
        </Svg>
      </button>
      <span className="ml-[7px] h-3 w-px bg-[#bbb]" />
      <span className="ml-[6px] h-3 w-px bg-[#bbb]" />
    </div>
  </section>
);

/* ---------- model canvas ---------- */
type NodeKind = "blue" | "green" | "yellow" | "rect" | "oval";
type ModelNode = { x: number; y: number; kind: NodeKind; text: string[] };

const nodeStyle: Record<NodeKind, string> = {
  blue: "rounded-[50%] bg-[#70aecd]",
  green: "rounded-[50%] bg-[#82cd7b] shadow-[1px_1px_1px_#8f9a8c]",
  yellow: "rounded-md bg-[#f3e17a] shadow-[1px_1px_1px_#9a9583]",
  rect: "rounded bg-[#e6e6e6]",
  oval: "rounded-[50%] bg-[#e6e6e6]",
};

const nodes: ModelNode[] = [
  { x: 390, y: 25, kind: "blue", text: ["Pharmacy"] },
  { x: 390, y: 72, kind: "yellow", text: ["Buffer"] },
  { x: 390, y: 119, kind: "green", text: ["Pharmacy_Buf..."] },
  { x: 390, y: 166, kind: "yellow", text: ["Intersect"] },
  { x: 390, y: 213, kind: "green", text: ["Output Feature", "Class"] },
  { x: 390, y: 261, kind: "yellow", text: ["Summary", "Statistics"] },
  { x: 390, y: 308, kind: "green", text: ["EnumerationA..."] },
  { x: 390, y: 355, kind: "yellow", text: ["Table Select"] },
  { x: 390, y: 402, kind: "green", text: ["Output Table"] },
  { x: 128, y: 119, kind: "blue", text: ["Zones"] },
  { x: 292, y: 119, kind: "blue", text: ["Buildings"] },
  { x: 288, y: 261, kind: "yellow", text: ["Intersect (2)"] },
  { x: 288, y: 308, kind: "green", text: ["Output Feature", "Class (2)"] },
  { x: 288, y: 355, kind: "yellow", text: ["Summary", "Statistics (2)"] },
  { x: 288, y: 402, kind: "green", text: ["EnumerationA..."] },
  { x: 288, y: 450, kind: "yellow", text: ["Join Field (2)"] },
  { x: 288, y: 497, kind: "green", text: ["EnumerationA...", "(2)"] },
  { x: 288, y: 544, kind: "yellow", text: ["Table Select (2)"] },
  { x: 420, y: 572, kind: "yellow", text: [] },
  { x: 511, y: 572, kind: "green", text: [] },
  { x: 59, y: 176, kind: "rect", text: ["Copy (3)"] },
  { x: 56, y: 237, kind: "oval", text: ["Output Data (3)"] },
  { x: 191, y: 341, kind: "rect", text: ["Copy (4)"] },
  { x: 189, y: 404, kind: "oval", text: ["Output Data (4)"] },
];

const rightChain = [43, 90, 137, 184, 231, 279, 326, 373];
const leftChain = [279, 326, 373, 420, 468, 515];

const ModelCanvas = () => (
  <div className="relative min-h-0 flex-1 overflow-hidden bg-[#f9f9f9] font-['Liberation_Sans',Arial,sans-serif]">
    <svg width="552" height="558" className="absolute top-0 left-0" fill="none" aria-hidden="true">
      <defs>
        <marker id="arrow" viewBox="0 0 10 10" refX="9" refY="5" markerWidth="5" markerHeight="5" markerUnits="userSpaceOnUse" orient="auto">
          <path d="M0 0 L10 5 L0 10 Z" fill="#555" />
        </marker>
      </defs>
      <g stroke="#8a8a8a" strokeWidth="1">
        {rightChain.map((y) => <path key={y} d={`M390 ${y} V${y + 11}`} markerEnd="url(#arrow)" />)}
        {leftChain.map((y) => <path key={y} d={`M288 ${y} V${y + 11}`} markerEnd="url(#arrow)" />)}
        <path d="M156 124 L361 161" markerEnd="url(#arrow)" />
        <path d="M145 134 L268 242" markerEnd="url(#arrow)" />
        <path d="M292 137 L289 243" markerEnd="url(#arrow)" />
        <path d="M315 130 L361 153" markerEnd="url(#arrow)" />
        <path d="M366 413 L317 436" markerEnd="url(#arrow)" />
        <path d="M312 509 L394 556" markerEnd="url(#arrow)" />
        <path d="M58 194 L57 219" markerEnd="url(#arrow)" />
        <path d="M190 359 L189 386" markerEnd="url(#arrow)" />
        <path d="M128 137 L134 558" />
      </g>
    </svg>
    {nodes.map((n) => (
      <div
        key={`${n.x}-${n.y}`}
        style={{ left: n.x - 28, top: n.y - 18 }}
        className={`absolute flex h-[36px] w-[56px] flex-col items-center justify-center text-[7px] leading-2 whitespace-nowrap text-[#111] ${nodeStyle[n.kind]}`}
      >
        {n.text.map((t) => (
          <span key={t}>{t}</span>
        ))}
      </div>
    ))}
    <svg width="60" height="60" className="absolute top-[120px] left-[70px]" fill="none" aria-hidden="true">
      <path d="M40 14 L14 34" stroke="#333" markerEnd="url(#arrow)" />
      <rect x="38.5" y="11.5" width="4" height="4" fill="#fff" stroke="#333" />
      <rect x="8.5" y="35.5" width="4" height="4" fill="#fff" stroke="#333" />
    </svg>
    <div role="menu" className="absolute top-[175px] left-[77px] w-[114px] border border-[#e2e2e2] bg-[#f8f8f8] p-px font-['Open_Sans','Noto_Sans',sans-serif] shadow-[2px_3px_4px_#0005]">
      <button role="menuitem" className="block h-[22px] w-full bg-[#c3e8f8] pl-[26px] text-left text-[9px] text-[#2f5f80]">
        <u>P</u>recondition
      </button>
    </div>
    <svg viewBox="0 0 750 660" width="250" height="220" className="absolute top-[89px] -left-px" fill="none" aria-hidden="true">
      <g stroke="#f57a50" strokeWidth="9" strokeLinecap="round" strokeLinejoin="round">
        <path d="M155 178 L168 155 L200 160 L250 170 Q275 180 288 210 Q308 235 304 265 L285 275 L268 285 L265 310 L255 328 L192 330 L188 338 L155 341 L115 328 L95 312 Q80 290 88 265 L108 245 L92 222 Q90 200 118 180 L155 178" />
        <path d="M215 165 L245 166 L266 174" strokeWidth="12" />
        <path d="M310 265 L345 258 Q355 234 370 236 L408 248 L440 238 Q480 240 520 258 L555 266 L578 288 Q590 310 576 328 L535 326 L525 350 L508 370 L480 372 L430 362 L365 348 L315 328 Q288 305 298 280 L310 265" />
        <path d="M500 264 L545 270 L546 280" />
        <path d="M455 425 Q430 393 390 395 Q350 398 315 435 Q288 465 290 525 L310 550 L345 572 L395 583 L455 583 L490 572 L508 545 L508 490 Q495 450 460 444 L440 448" />
        <path d="M350 467 L395 466 M362 472 L364 500 L385 507 Q402 502 408 488 L405 478 L395 468 M435 460 L414 470 L408 490 L420 506 L442 508 L443 484 L428 484" />
        <path d="M380 558 L382 545 L415 537 L472 545" />
      </g>
    </svg>
  </div>
);

const ModelView = () => (
  <section aria-label="Pharmacy model" className="flex min-w-0 flex-1 flex-col">
    <div className="flex h-[19px] shrink-0 items-end border-b-2 border-[#1a7cc0]">
      <div className="flex h-[18px] items-center gap-1 bg-[#0f7dc7] pr-1 pl-[5px] text-[9px] text-white">
        <Svg box="0 0 40 36" w={13} h={11}>
          <path d="M3 3 H11 V11 H3 Z M3 24 H11 V32 H3 Z M16 14 H24 V22 H16 Z M30 14 H38 V22 H30 Z M11 8 L18 15 M11 27 L18 20 M24 18 H30" fill="#fff" stroke="#fff" strokeWidth="2" />
        </Svg>
        Pharmacy
        <button aria-label="Close model" className="ml-1"><Close /></button>
      </div>
    </div>
    <ModelCanvas />
    <div className="flex h-[14px] shrink-0 items-center bg-[#e9e9e9] pl-[6px]">
      <button aria-label="Scroll left" className="w-[55px]">
        <Svg box="0 0 9 12" w={4} h={6}>
          <path d="M7 1 L2 6 L7 11" stroke="#444" strokeWidth="2.4" />
        </Svg>
      </button>
      <div className="h-2 flex-1 rounded-l-full bg-[#b3b3b3]" />
    </div>
    <div className="flex h-[22px] shrink-0 items-center bg-[#f9f9f9] pl-[5px] text-[9px] whitespace-nowrap text-[#555]">
      <span className="flex-1">3.1.5.41833</span>
      <span className="text-[10px] font-semibold text-[#222]">Mode:</span>
      <button aria-label="Select mode" className="ml-[6px]">{icons.select}</button>
      <button aria-label="Pan mode" className="ml-[6px]">{icons.pan}</button>
      <span className="mx-1 h-4 w-px bg-[#ccc]" />
      <span className="text-[10px] font-semibold text-[#222]">Vi</span>
    </div>
  </section>
);

/* ---------- taskbar ---------- */
const apps: { name: string; tile: string; mark: string; art: React.ReactNode }[] = [
  { name: "Start", tile: "", mark: "bg-transparent", art: <><path d="M1 1 H28 V28 H1 Z M31 1 H58 V28 H31 Z M1 31 H28 V58 H1 Z M31 31 H58 V58 H31 Z" fill="#1b8fe0" /><path d="M1 1 H28 V28 H1 Z" fill="#4cbcf2" /></> },
  {
    name: "Webex", tile: "bg-[#e8a9a7]", mark: "bg-[#c03030]",
    art: <><rect x="1" y="1" width="58" height="58" rx="12" fill="#15181c" /><path d="M22 16 Q8 14 9 26 Q10 44 20 44 Q30 42 32 20" stroke="#3fc1f0" strokeWidth="7" /><path d="M24 22 Q30 44 36 44 Q44 44 48 30" stroke="#3fae8c" strokeWidth="7" /><path d="M34 24 Q38 14 46 17 Q54 22 49 34" stroke="#2a6fe0" strokeWidth="7" /></>,
  },
  {
    name: "Chrome", tile: "", mark: "bg-[#8a8a8a]",
    art: <><circle cx="28" cy="32" r="27" fill="#f6c42c" /><path d="M28 32 L4 18 A27 27 0 0 1 52 18 Z" fill="#e2402f" /><path d="M28 32 L4 18 A27 27 0 0 0 28 59 L40 38 Z" fill="#2fa04f" /><circle cx="28" cy="32" r="12" fill="#3f7fe8" stroke="#fff" strokeWidth="4" /><circle cx="46" cy="14" r="14" fill="#cfe0f5" /><circle cx="46" cy="10" r="5" fill="#1c5fb8" /><path d="M37 22 Q46 11 55 22 Z" fill="#1c5fb8" /></>,
  },
  {
    name: "Firefox", tile: "", mark: "bg-[#8a8a8a]",
    art: <><circle cx="30" cy="32" r="26" fill="#ff7a2e" /><path d="M40 4 Q58 18 56 36 Q50 58 30 58 Q50 50 48 30 Q46 14 40 4 Z" fill="#ffc93a" /><path d="M6 22 Q8 10 16 8 Q18 16 28 16 L18 30 Z" fill="#f2405a" /><circle cx="31" cy="33" r="12" fill="#8047c9" /><path d="M20 30 Q28 28 32 34 Q26 42 20 38 Z" fill="#ff9a3c" /></>,
  },
  {
    name: "Paint", tile: "", mark: "bg-[#8a8a8a]",
    art: <><ellipse cx="26" cy="34" rx="24" ry="19" transform="rotate(-20 26 34)" fill="#c8dcea" stroke="#8fa9ba" strokeWidth="2" /><circle cx="15" cy="32" r="5" fill="#e0503c" /><circle cx="24" cy="21" r="5" fill="#4fae58" /><circle cx="37" cy="20" r="4" fill="#f0bd3c" /><circle cx="18" cy="44" r="4" fill="#3f7fd0" /><path d="M30 52 L54 8" stroke="#b0804c" strokeWidth="6" /><path d="M49 14 L57 1" stroke="#777" strokeWidth="7" /></>,
  },
  {
    name: "EndNote", tile: "", mark: "bg-[#8a8a8a]",
    art: <><rect x="1" y="1" width="58" height="58" rx="6" fill="#fff" /><path d="M1 42 Q20 46 42 58 H8 Q1 58 1 51 Z" fill="#5a35b0" /><text x="14" y="37" fontSize="22" fontWeight="700" fill="#111" fontFamily="Liberation Sans, sans-serif">EN</text></>,
  },
  {
    name: "File Explorer", tile: "", mark: "bg-[#8a8a8a]",
    art: <><path d="M2 6 H22 L28 12 H58 V24 H2 Z" fill="#d99a1c" /><rect x="2" y="14" width="57" height="42" rx="2" fill="#fbcb45" /><path d="M12 44 H50 V56 H12 Z" fill="#1b78c2" /></>,
  },
  {
    name: "Word", tile: "", mark: "bg-[#8a8a8a]",
    art: <><rect x="16" y="2" width="43" height="56" rx="4" fill="#2a7ad2" /><path d="M16 2 H59 V20 H16 Z" fill="#45a5ee" /><path d="M16 40 H59 V58 H16 Z" fill="#1a4ea6" /><rect x="1" y="15" width="30" height="30" rx="3" fill="#1a55b5" /><path d="M7 23 L11 37 L16 25 L21 37 L25 23" stroke="#fff" strokeWidth="3.4" /></>,
  },
  {
    name: "ArcGIS Pro", tile: "bg-[#fafcfd]", mark: "bg-[#1473c0]",
    art: <><path d="M30 0 L57 15 V45 L30 60 L3 45 V15 Z" fill="#1a6fb8" /><path d="M43 22 A15 15 0 1 1 30 15" stroke="#e3f1fb" strokeWidth="6" /><path d="M34 8 L46 16 L36 26 Z" fill="#e3f1fb" /><path d="M30 24 A7 7 0 1 0 37 32" stroke="#e3f1fb" strokeWidth="4" /></>,
  },
];

const Taskbar = () => (
  <footer className="flex h-10 shrink-0 items-center gap-[3px] border-t border-[#c6c6c6] bg-[#f0f0ef] pl-[473px]">
    {apps.map((a) => (
      <button key={a.name} aria-label={a.name} className={`flex h-[33px] w-[33px] flex-col items-center justify-end rounded ${a.tile}`}>
        <svg viewBox="0 0 60 60" width="20" height="20" fill="none" aria-hidden="true">{a.art}</svg>
        <span className={`mt-[3px] mb-px h-[2px] rounded-full ${a.mark} ${a.name === "ArcGIS Pro" ? "w-3" : "w-[5px]"}`} />
      </button>
    ))}
  </footer>
);

export default function App() {
  return (
    <div className="flex h-screen flex-col overflow-hidden bg-[#e9e9e9] font-['Open_Sans','Noto_Sans',sans-serif]">
      <Header />
      <main className="flex min-h-0 flex-1 pt-[6px] pb-[6px] pl-[7px]">
        <Contents />
        <MapView />
        <ModelView />
      </main>
      <Taskbar />
    </div>
  );
}
